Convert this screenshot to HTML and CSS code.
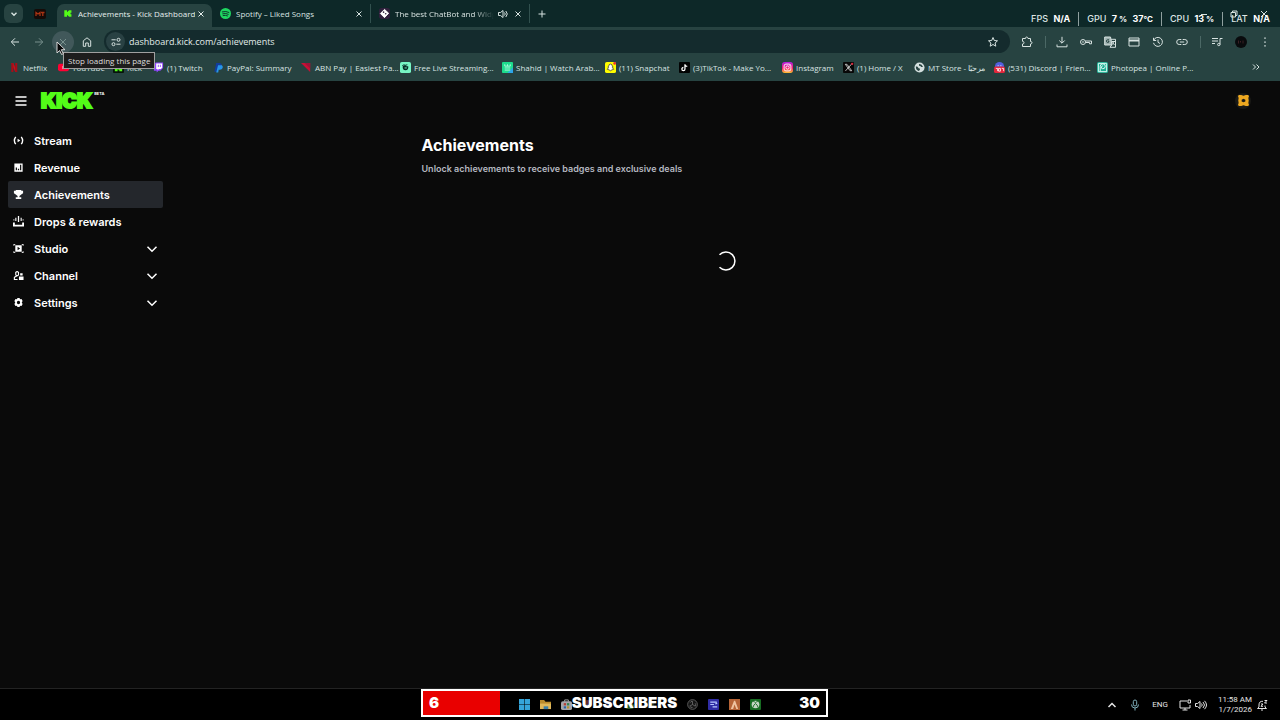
FILE: index.html
```html
<!DOCTYPE html>
<html lang="en">
<head>
  <meta charset="utf-8">
  <title>Achievements - Kick Dashboard</title>
  <link rel="stylesheet" href="styles.css">
</head>
<body>

<!-- Browser window -->
<header class="browser">
  <div class="tab-strip">
    <button class="tab-search" type="button" aria-label="Search tabs">
      <svg class="icon" viewBox="0 0 12 12"><path d="M3.5 4.8 6 7.3l2.5-2.5" stroke-width="1.4"/></svg>
    </button>
    <button class="pinned" type="button" aria-label="Pinned tab">
      <svg viewBox="0 0 12 12"><rect y="1" width="12" height="10" rx="2" fill="#150b08"/><path d="M2 8V4.500l2 1.500 2-1.500V8M7 4.500h3.500M8.800 4.500V8" fill="none" stroke="#a83414" stroke-width="1.300"/></svg>
    </button>
    <div class="tab active">
      <svg class="favicon" viewBox="0 0 12 12"><path fill="#53fc18" d="M2.500 2.500h3v1.800h.8v-.9h1v-.9h3v2.700h-1v1.600h1v2.700h-3v-.9h-1v-.9h-.8v1.800h-3z"/></svg>
      <span class="tab-title">Achievements - Kick Dashboard</span>
      <button class="tab-close" type="button" aria-label="Close"><svg class="icon" viewBox="0 0 12 12"><path d="m3.500 3.500 5 5m0-5-5 5"/></svg></button>
    </div>
    <div class="tab">
      <svg class="favicon" viewBox="0 0 12 12"><circle cx="6" cy="6" r="6" fill="#1ed760"/><path d="M2.500 4.200q4-1.200 7.200.6M3 6.300q3.400-1 6 .5M3.400 8.200q2.700-.7 4.800.4" fill="none" stroke="#0d2828" stroke-width="1" stroke-linecap="round"/></svg>
      <span class="tab-title">Spotify – Liked Songs</span>
      <button class="tab-close" type="button" aria-label="Close"><svg class="icon" viewBox="0 0 12 12"><path d="m3.500 3.500 5 5m0-5-5 5"/></svg></button>
    </div>
    <div class="tab">
      <svg class="favicon" viewBox="0 0 12 12"><rect width="12" height="12" rx="3" fill="#30203c"/><path d="m6 1.500 4.500 4.200L6 10.500 1.500 6z" fill="#fff" stroke="#fff"/><circle cx="5" cy="4.500" r=".9" fill="#30203c"/><circle cx="7.300" cy="6.300" r=".9" fill="#30203c"/></svg>
      <span class="tab-title fade">The best ChatBot and Widg</span>
      <svg class="icon sound" viewBox="0 0 12 12"><path d="M1.500 4.500h2L6 2.500v7L3.500 7.500h-2zM7.500 4.500q1.500 1.500 0 3M8.800 3q3 3 0 6"/></svg>
      <button class="tab-close" type="button" aria-label="Close"><svg class="icon" viewBox="0 0 12 12"><path d="m3.500 3.500 5 5m0-5-5 5"/></svg></button>
    </div>
    <button class="new-tab" type="button" aria-label="New tab"><svg class="icon" viewBox="0 0 12 12"><path d="M6 2.500v7M2.500 6h7"/></svg></button>
    <div class="window-buttons">
      <button type="button" aria-label="Minimize"><svg class="icon" viewBox="0 0 12 12"><path d="M3 6.500h6"/></svg></button>
      <button type="button" aria-label="Restore"><svg class="icon" viewBox="0 0 12 12"><path d="M3 4.500h4.500V9H3zM4.500 4.500v-1.500H9v4.500H7.500"/></svg></button>
      <button type="button" aria-label="Close window"><svg class="icon" viewBox="0 0 12 12"><path d="m3 3 6 6m0-6-6 6"/></svg></button>
    </div>
  </div>

  <div class="toolbar">
    <button class="tool" type="button" aria-label="Back"><svg class="icon" viewBox="0 0 12 12"><path d="M10 6H2.500M6 2.300 2.300 6 6 9.700"/></svg></button>
    <button class="tool dim" type="button" aria-label="Forward"><svg class="icon" viewBox="0 0 12 12"><path d="M2 6h7.500M6 2.300 9.700 6 6 9.700"/></svg></button>
    <button class="tool dim hovered" type="button" aria-label="Stop"><svg class="icon" viewBox="0 0 12 12"><path d="m3 3 6 6m0-6-6 6"/></svg></button>
    <button class="tool" type="button" aria-label="Home"><svg class="icon" viewBox="0 0 12 12"><path d="M2.300 10.300V4.800L6 1.800l3.700 3v5.500H7.300V7H4.700v3.300z"/></svg></button>
    <form class="omnibox">
      <span class="site-info"><svg class="icon" viewBox="0 0 12 12"><path d="M1.500 3.800h4.200M6.300 8.200h4.200"/><circle cx="8.500" cy="3.800" r="1.500"/><circle cx="3.500" cy="8.200" r="1.500"/></svg></span>
      <input class="url" type="text" aria-label="Address" value="dashboard.kick.com/achievements">
      <svg class="icon" viewBox="0 0 12 12"><path d="m6 1.500 1.300 3 3.200.3L8.100 7l.7 3.200L6 8.500l-2.800 1.700L3.900 7 1.500 4.800l3.200-.3z"/></svg>
    </form>
    <div class="extensions">
      <button class="tool" type="button" aria-label="Extensions"><svg class="icon" viewBox="0 0 12 12"><path d="M1.500 2.500h3q0-1.500 1.200-1.500T7 2.500h2.500v3q1.500 0 1.500 1.200T9.500 8v2.500h-8V8q1.500 0 1.500-1.300T1.500 5.300z"/></svg></button>
      <span class="divider"></span>
      <button class="tool" type="button" aria-label="Downloads"><svg class="icon" viewBox="0 0 12 12"><path d="M6 .8V7M3.300 4.500 6 7.200l2.700-2.700M1 8.500v2.300h10V8.500"/></svg></button>
      <button class="tool" type="button" aria-label="Passwords"><svg class="icon" viewBox="0 0 12 12"><circle cx="3" cy="6" r="2.500"/><circle cx="3" cy="6" r=".4"/><path d="M5.500 5h6v2.800h-2V6.500H5.500"/></svg></button>
      <button class="tool" type="button" aria-label="Translate"><svg class="icon" viewBox="0 0 12 12"><path d="M.7 1h5.800l1.500 8H.7z" fill="#9fb2b0"/><path d="M7 3.300h4.500v8H6L7.700 9M8 5.500h3M9.500 5v.5Q9.500 7.500 8 8.500M8.500 6.500 10.500 9"/><path d="M5 3.800H3.500q-1 0-1 1.300T3.700 6.500 5 5.300h-1" stroke="#274341"/></svg></button>
      <button class="tool" type="button" aria-label="Payment"><svg class="icon" viewBox="0 0 12 12"><path d="M1 2h10v8H1z"/><path d="M1 4.500h10" stroke-width="2"/></svg></button>
      <button class="tool" type="button" aria-label="History"><svg class="icon" viewBox="0 0 12 12"><path d="M1.500 1.800v2.700h2.700M1.700 4.300a4.500 4.500 0 1 1-.2 2.500M6 3.500V6.300l2 1.200"/></svg></button>
      <button class="tool" type="button" aria-label="Copy link"><svg class="icon" viewBox="0 0 12 12"><path d="M5.300 3.500H3.200a2.500 2.500 0 0 0 0 5h2.100M6.700 3.500h2.100a2.500 2.500 0 0 1 0 5H6.700M3.800 6h4.400"/></svg></button>
      <span class="divider"></span>
      <button class="tool" type="button" aria-label="Media"><svg class="icon" viewBox="0 0 12 12"><path d="M1 2.500h6M1 5h6M1 7.500h3M9 8.500V2.500h2.500"/><circle cx="7.800" cy="8.500" r="1.200"/></svg></button>
      <button class="tool" type="button" aria-label="Profile"><svg class="avatar" viewBox="0 0 12 12"><circle cx="6" cy="6" r="6" fill="#090b0d"/><path d="M3.500 4.500v3M5.500 5v1.500M8 4.500v3" stroke="#3b2025"/></svg></button>
      <button class="tool" type="button" aria-label="More"><svg class="icon" viewBox="0 0 12 12"><path d="M6 1.500v1.300M6 5.400v1.300M6 9.300v1.300" stroke-width="1.500"/></svg></button>
    </div>
  </div>

  <nav class="bookmarks">
    <a href="#"><svg viewBox="0 0 12 12"><path d="M2.500 1h2.200l4.300 10H6.800z" fill="#c80f1c"/><path d="M2.500 1h2.200v10H2.500zM6.800 1H9v10H6.800z" fill="#a80d18"/></svg>Netflix</a>
    <a href="#"><svg viewBox="0 0 12 12"><rect y="2" width="12" height="8" rx="2" fill="#f03"/><path d="m5 4 3 2-3 2z" fill="#fff"/></svg>YouTube</a>
    <a href="#"><svg viewBox="0 0 12 12"><rect width="12" height="12" rx="1" fill="#06140a"/><path fill="#53fc18" d="M2 2h3v2.200h1V3h1V2h3v3H9v2h1v3H7V9H6V7.800H5V10H2z"/></svg>Kick</a>
    <a href="#"><svg viewBox="0 0 12 12"><path d="M1 2.500 3 .5h8v6L8 9.500H6L4 11.500v-2H1z" fill="#9146ff"/><path d="M3.500 1.500H10v4.700L8.500 7.500h-2L5 9V7.500H3.500z" fill="#fff"/><path d="M5.800 3v2.500M8 3v2.500" stroke="#9146ff"/></svg>(1) Twitch</a>
    <a href="#"><svg viewBox="0 0 12 12"><path d="M3.500 1h4Q10 1.500 9.500 4T6 7H4.700L4 10.500H1.500z" fill="#123c9c"/><path d="M5.500 3.500h4.200q1.500 1 .8 3T7.500 8.500H6.200L5.700 11.500H3.500z" fill="#2795e9"/></svg>PayPal: Summary</a>
    <a href="#"><svg viewBox="0 0 12 12"><path d="M0 1h10v10z" fill="#c90f35"/><path d="m4 1 6 6V1z" fill="#9d1238"/></svg>ABN Pay | Easiest Pa...</a>
    <a href="#"><svg viewBox="0 0 12 12"><rect width="12" height="12" rx="2" fill="#77f5c4"/><path d="M3 4.500q3-2 4 .2h2q.5 4.300-3 4.300-3.500 0-3-4.500z" fill="#072d27"/><path d="M2.500 4Q4 2.500 6 3.500L8 3" fill="none" stroke="#072d27"/><path d="M5 6.500h2.500" stroke="#77f5c4"/></svg>Free Live Streaming...</a>
    <a href="#"><svg viewBox="0 0 12 12"><rect width="12" height="12" rx="1" fill="#1ddc8d"/><path d="M12 6v6H6z" fill="#2da5e9"/><path d="M3 2.500v2h6v-2M6 2.500v2M3 6.500h6M3 8.800h6" fill="none" stroke="#b5fbe0"/></svg>Shahid | Watch Arab...</a>
    <a href="#"><svg viewBox="0 0 12 12"><rect width="12" height="12" rx="2" fill="#fffc00"/><path d="M6 2.300q2 0 2 2.500l1 .7-1 .5 1.500 2-1.800.5L6 9.500l-1.700-1L2.500 8 4 6l-1-.5 1-.7q0-2.500 2-2.500z" fill="#fff" stroke="#333" stroke-width=".8"/><circle cx="10.500" cy="1.500" r="1.500" fill="#e33"/></svg>(11) Snapchat</a>
    <a href="#"><svg viewBox="0 0 12 12"><rect width="12" height="12" rx="1" fill="#020303"/><path d="M6.500 2.500v5.200a1.700 1.700 0 1 1-1.700-1.700M6.500 2.800Q7 4.800 9 4.800" fill="none" stroke="#fff" stroke-width="1.400"/></svg>(3)TikTok - Make Yo...</a>
    <a href="#"><svg viewBox="0 0 12 12"><defs><linearGradient id="ig" x2="0" y2="1"><stop stop-color="#b020e0"/><stop offset=".55" stop-color="#f51b72"/><stop offset="1" stop-color="#ffc52d"/></linearGradient></defs><rect width="12" height="12" rx="3" fill="url(#ig)"/><rect x="2.300" y="2.300" width="7.400" height="7.400" rx="2" fill="none" stroke="#fff"/><circle cx="6" cy="6" r="1.800" fill="none" stroke="#fff"/><circle cx="8.200" cy="3.800" r=".5" fill="#fff"/></svg>Instagram</a>
    <a href="#"><svg viewBox="0 0 12 12"><rect width="12" height="12" rx="1" fill="#080808"/><path d="M2.500 2.500h1.800l5.200 7H7.700zM9.300 2.300 2.700 9.700" fill="none" stroke="#ddd" stroke-width=".9"/><circle cx="10" cy="2" r="1.300" fill="#d12b3f"/></svg>(1) Home / X</a>
    <a href="#"><svg viewBox="0 0 12 12"><circle cx="6" cy="6" r="5.500" fill="#d4e0df"/><path d="M2 5q2-.5 2.500 1t2 1Q7 9 5 9.800 2 9 2 5zM5.500 2.300q3-.3 4.300 3Q8 6 7.500 5t-2-1z" fill="#274341"/></svg>MT Store - مرحبًا</a>
    <a href="#"><svg viewBox="0 0 12 12"><circle cx="6" cy="5" r="5" fill="#5360df"/><rect y="5" width="12" height="7" rx="2" fill="#e3263b"/><path d="M2 7h2v3M5 7h2v3H5zM8.500 7h2v3M4 4h1M7 4h1" fill="none" stroke="#fff" stroke-width=".9"/></svg>(531) Discord | Frien...</a>
    <a href="#"><svg viewBox="0 0 12 12"><rect width="12" height="12" rx="2" fill="#1fae93"/><path d="M3.500 10V5q0-3 2.800-3T9 4.700 6.300 7.300 5 5q.5-1 1.500-.7M1.500 10.500v-9h9v9z" fill="none" stroke="#e9fffa"/></svg>Photopea | Online P...</a>
    <button class="more-bookmarks" type="button" aria-label="More bookmarks"><svg class="icon" viewBox="0 0 12 12"><path d="m3 3.500 2.500 2.500L3 8.500M6.500 3.500 9 6 6.500 8.500"/></svg></button>
  </nav>

  <div class="tooltip" role="tooltip">Stop loading this page</div>
  <svg class="cursor" viewBox="0 0 10 15"><path d="M1 1v11l2.600-2.500 2 4 1.700-.8-2-4H9z" fill="#050505" stroke="#e8e8e8" stroke-width=".9"/></svg>

  <div class="stats">
    <span>FPS <b>N/A</b></span>
    <span>GPU <b>7<small> %</small></b> <b>37<small>°C</small></b></span>
    <span>CPU <b>13<small> %</small></b></span>
    <span>LAT <b>N/A</b></span>
  </div>
</header>

<!-- Kick dashboard -->
<div class="dashboard">
  <div class="topbar">
    <button class="menu" type="button" aria-label="Menu"><svg viewBox="0 0 12 12"><path d="M.5 2h11M.5 6h11M.5 10h11"/></svg></button>
    <a class="logo" href="#"><span class="wordmark">KICK</span><sup>BETA</sup></a>
    <button class="account" type="button" aria-label="Account"><svg viewBox="0 0 12 12"><path fill="#eda820" fill-rule="evenodd" d="M1 0h2.500L6 .8 8.500 0H11l1 1.200-.7 2 .4 2.800-.4 2.800.7 2-1 1.200H8.500L6 11.200 3.500 12H1L0 10.800l.7-2L.3 6l.4-2.800-.7-2zm5 4.200-2 1V7l2 1 2-1V5.200z"/></svg></button>
  </div>

  <div class="content">
    <nav class="sidebar">
      <a href="#"><svg viewBox="0 0 12 12"><path d="M3 2q-3 4 0 8M9 2q3 4 0 8" fill="none" stroke="#fff" stroke-width="1.500"/><path d="m5 4 3 2-3 2z"/></svg>Stream</a>
      <a href="#"><svg viewBox="0 0 12 12"><path fill-rule="evenodd" d="M1.500 1.500h9v9h-9zM3 6v3h1.300V6zm2.300 1.300V9h1.400V7.300zM7.700 3v6H9V3z"/></svg>Revenue</a>
      <a class="current" href="#"><svg viewBox="0 0 12 12"><path d="M3 1h6v1h2v2.500L9 6 7 7.500V9h2v2H3V9h2V7.500L3 6 1 4.500V2h2z"/></svg>Achievements</a>
      <a href="#"><svg viewBox="0 0 12 12"><path d="M0 7h2v2.500h8V7h2v4.500H0zM5.300 0h1.400v6.500H5.300zM2.500 2h1.200v3.500H2.500zM8.300 2h1.200v3.500H8.300zM.5 3.500h1V5h-1zM10.500 3.500h1V5h-1z"/></svg>Drops &amp; rewards</a>
      <a href="#"><svg viewBox="0 0 12 12"><path fill-rule="evenodd" d="M2.500 2.500h7v7h-7zM5 4.200v3.600L7.800 6zM.5 1h2v1h-1v1h-1zM9.500 1h2v2h-1V2h-1zM.5 9h1v1h1v1h-2zM10.500 9h1v2h-2v-1h1z"/></svg>Studio<svg class="chevron" viewBox="0 0 12 12"><path d="m1.500 3.800 4.500 4.500 4.500-4.500"/></svg></a>
      <a href="#"><svg viewBox="0 0 12 12"><path d="M3 5.500v-3q1.500-1.500 3 0v3L4.500 6.500zM4 6.500 1.500 8v2.300H5" fill="none" stroke="#fff" stroke-width="1.200"/><path d="M7.800 3.500h2.700V6H7.800zM6.500 7.200h5V11h-5z"/></svg>Channel<svg class="chevron" viewBox="0 0 12 12"><path d="m1.500 3.800 4.500 4.500 4.500-4.500"/></svg></a>
      <a href="#"><svg viewBox="0 0 12 12"><path fill-rule="evenodd" d="M4.800 1h2.400l.4 1.500 1.700-.3 1.200 2.100L9.500 6l1 1.700-1.200 2.100-1.700-.3L7.200 11H4.800l-.4-1.500-1.700.3-1.200-2.100 1-1.700-1-1.700 1.200-2.100 1.700.3zM6 4.200a1.800 1.800 0 1 0 0 3.600 1.800 1.800 0 0 0 0-3.600z"/></svg>Settings<svg class="chevron" viewBox="0 0 12 12"><path d="m1.500 3.800 4.500 4.500 4.500-4.500"/></svg></a>
    </nav>

    <main>
      <section class="achievements">
        <h1>Achievements</h1>
        <p>Unlock achievements to receive badges and exclusive deals</p>
        <svg class="spinner" viewBox="0 0 20 20"><path d="M3.500 3.700a9 9 0 1 1 0 12.600"/></svg>
      </section>
    </main>
  </div>
</div>

<!-- Windows taskbar -->
<footer class="taskbar">
  <div class="apps">
    <svg viewBox="0 0 12 12"><path d="M0 0h5.700v5.700H0zM6.300 0H12v5.700H6.300zM0 6.300h5.700V12H0zM6.300 6.300H12V12H6.300z" fill="#35a4d9"/></svg>
    <svg viewBox="0 0 12 12"><path d="M0 1h4.500l1.500 2h6v8H0z" fill="#b98b2c"/><path d="M0 5h12v6H0z" fill="#dfb759"/><path d="M4 8h5v3H4z" fill="#3b7fa8"/></svg>
    <svg viewBox="0 0 12 12"><path d="M4 3V1h4v2" fill="none" stroke="#aaa"/><rect y="2.500" width="12" height="9.500" rx="2" fill="#a5a5aa"/><path d="M3 4.500h2.500V7H3z" fill="#b33f37"/><path d="M6.500 4.500H9V7H6.500z" fill="#32834d"/><path d="M3 8h2.500v2.300H3z" fill="#2864a7"/><path d="M6.500 8H9v2.300H6.500z" fill="#b19329"/></svg>
    <svg viewBox="0 0 12 12"><circle cx="6" cy="5" r="4" fill="#5e2c30"/><circle cx="6" cy="8" r="2.200" fill="#38508c"/></svg>
    <svg viewBox="0 0 12 12"><rect x="2" y="2" width="8" height="8" rx="3" fill="#141c3c"/></svg>
    <svg viewBox="0 0 12 12"><rect x="1" y="5" width="10" height="6" rx="3" fill="#2c5b25"/></svg>
    <svg viewBox="0 0 12 12"><rect x="2" y="2" width="8" height="8" rx="2" fill="#1c2a18"/></svg>
    <svg viewBox="0 0 12 12"><rect x="2" y="2" width="8" height="8" rx="3" fill="#151515"/></svg>
    <svg viewBox="0 0 12 12"><circle cx="6" cy="6" r="5.300" fill="#161616" stroke="#777" stroke-width=".8"/><path d="M6 6V2.500q-2 0-2.500 1.500M6 6l3 1.800q1-1.500 0-3M6 6 3 7.800q1 1.700 3 1.500" fill="none" stroke="#777" stroke-width=".8"/></svg>
    <svg viewBox="0 0 12 12"><rect width="12" height="12" rx="1" fill="#302da5"/><path d="M2.500 3.500h7M2.500 6h4M5 8.500h5M8 5.500l2-1" stroke="#b7c7ff" stroke-width="1.300"/></svg>
    <svg viewBox="0 0 12 12"><rect width="12" height="12" fill="#b66436"/><path d="m2 11 3.500-9h1.200L10 11H8L6 6 4.500 11z" fill="#efc39f"/></svg>
    <svg viewBox="0 0 12 12"><rect width="12" height="12" rx="1" fill="#176c22"/><circle cx="6" cy="6" r="4.200" fill="#c4d4c3"/><path d="M3 9.500Q4 6 6 5q2 1 3 4.500M3.500 2.500Q5 3 6 4q1-1 2.500-1.500" fill="none" stroke="#176c22"/></svg>
  </div>
  <div class="tray">
    <svg class="icon" viewBox="0 0 12 12"><path d="M2.500 8 6 4.500 9.500 8" stroke-width="1.500"/></svg>
    <svg class="icon mic" viewBox="0 0 12 12"><rect x="4.300" y="1" width="3.400" height="6" rx="1.700"/><path d="M2.500 5.500q0 3.500 3.500 3.500t3.500-3.500M6 9v2.500"/></svg>
    <span class="lang">ENG</span>
    <span class="tray-pair">
      <svg class="icon" viewBox="0 0 12 12"><path d="M8 2H1v7h10V6M3.500 11h5M6 9v2M9 1h2.500v3H9z"/></svg>
      <svg class="icon" viewBox="0 0 12 12"><path d="M.5 4.500h2L5 2.500v7L2.500 7.500h-2zM6.500 4.500q1.500 1.500 0 3M8 3q3 3 0 6M9.500 1.800q4 4.200 0 8.400"/></svg>
    </span>
    <span class="tray-pair">
      <time class="clock">11:58 AM<br>1/7/2026</time>
      <svg class="icon" viewBox="0 0 12 12"><path d="M7 2.300Q3 2 3 6v2L1.500 9.500h9L9 8V6.500M5 11h2M5 5h2L5 7.300h2M8.500 1.500h2.500L8.500 4H11"/></svg>
    </span>
  </div>

  <!-- Stream goal -->
  <div class="goal">
    <div class="goal-fill" style="width: 19%"></div>
    <span>6</span><span>SUBSCRIBERS</span><span class="goal-target">30</span>
  </div>
</footer>

</body>
</html>
```
FILE: styles.css
```css
* {
  box-sizing: border-box;
}

body {
  display: flex;
  flex-direction: column;
  min-height: 100vh;
  margin: 0;
  background: #0a0a0a;
  color: #fff;
  font-family: Inter, sans-serif;
}

button {
  display: flex;
  align-items: center;
  justify-content: center;
  padding: 0;
  border: none;
  background: none;
  color: inherit;
  cursor: pointer;
}

a {
  color: inherit;
  text-decoration: none;
}

svg {
  display: block;
  flex: none;
  width: 12px;
  height: 12px;
}

.icon {
  fill: none;
  stroke: currentColor;
}

/* Browser */
.browser {
  position: relative;
  background: #274341;
  color: #d8e3e1;
  font-family: "Open Sans", "Noto Sans", sans-serif;
  font-size: 8px;
}

.tab-strip {
  display: flex;
  align-items: center;
  height: 27px;
  padding-left: 4px;
  background: #0d2828;
}

.tab-search {
  width: 19px;
  height: 19px;
  border-radius: 6px;
  background: #274341;
}

.pinned {
  width: 34px;
}

.tab {
  display: flex;
  align-items: center;
  width: 159px;
  height: 19px;
  padding: 0 5px 0 8px;
  border-right: 1px solid #31504e;
}

.tab.active {
  align-self: flex-end;
  width: 155px;
  height: 23px;
  padding: 0 5px 4px;
  border: none;
  border-radius: 7px 7px 0 0;
  background: #274341;
  color: #e6efed;
}

.favicon {
  width: 11px;
  height: 11px;
  margin-right: 5px;
}

.tab-title {
  flex: 1;
  overflow: hidden;
  white-space: nowrap;
}

.fade {
  -webkit-mask-image: linear-gradient(to right, #000 80%, transparent);
  mask-image: linear-gradient(to right, #000 80%, transparent);
}

.sound {
  margin: 0 3px;
}

.new-tab {
  width: 23px;
}

.window-buttons {
  display: flex;
  gap: 18px;
  margin-left: auto;
  padding-right: 10px;
}

.toolbar {
  display: flex;
  align-items: center;
  height: 27px;
  padding: 0 2px 0 4px;
  margin-top: 1px;
}

.tool {
  width: 22px;
  height: 22px;
  margin-right: 2px;
}

.dim {
  color: #78908d;
}

.hovered {
  border-radius: 11px;
  background: #41585a;
}

.omnibox {
  display: flex;
  flex: 1;
  align-items: center;
  height: 23px;
  margin-left: 4px;
  padding: 0 11px 0 2px;
  border-radius: 12px;
  background: #142b2d;
}

.site-info {
  display: flex;
  align-items: center;
  justify-content: center;
  width: 19px;
  height: 19px;
  border-radius: 10px;
  background: #294143;
}

.url {
  flex: 1;
  padding: 0 4px;
  border: none;
  outline: none;
  background: none;
  color: #e2ebea;
  font: inherit;
  font-size: 9px;
}

.extensions {
  display: flex;
  align-items: center;
  padding-left: 6px;
}

.divider {
  width: 1px;
  height: 12px;
  margin: 0 5px;
  background: #4b6865;
}

.bookmarks {
  display: grid;
  grid-template-columns: 49px 55px 40px 60px 88px 99px 102px 103px 74px 103px 61px 71px 80px 103px 103px 1fr;
  align-items: center;
  height: 26px;
  padding: 0 18px 2px 9px;
}

.bookmarks a {
  display: flex;
  align-items: center;
  gap: 3px;
  white-space: nowrap;
}

.bookmarks a svg {
  width: 11px;
  height: 11px;
}

.more-bookmarks {
  justify-self: end;
}

.tooltip {
  position: absolute;
  top: 52px;
  left: 63px;
  height: 17px;
  padding: 0 4px;
  border: 1px solid #a0a0a0;
  background: #1d1d1d;
  color: #ddd;
  line-height: 15px;
  white-space: nowrap;
}

.cursor {
  position: absolute;
  top: 41px;
  left: 56px;
  width: 10px;
  height: 15px;
}

.stats {
  position: absolute;
  top: 12px;
  right: 10px;
  display: flex;
  color: #dde6e5;
  font-family: Inter, sans-serif;
  font-size: 9px;
  font-weight: 500;
  line-height: 14px;
}

.stats span {
  padding: 0 8px;
  border-left: 1px solid #8fa09f;
}

.stats span:first-child {
  border: none;
}

.stats span:last-child {
  padding-right: 0;
}

.stats b {
  margin-left: 3px;
  color: #fff;
}

.stats small {
  font-size: 8px;
}

/* Dashboard */
.dashboard {
  flex: 1;
}

.topbar {
  display: flex;
  align-items: center;
  height: 39px;
  padding: 0 29px 0 15px;
}

.menu svg {
  fill: none;
  stroke: #fff;
  stroke-width: 1.5;
}

.logo {
  display: flex;
  align-items: center;
  margin-left: 14px;
}

.wordmark {
  color: #53fc18;
  font-size: 20px;
  font-weight: 900;
  line-height: 22px;
  -webkit-text-stroke: 2px #53fc18;
}

.logo sup {
  align-self: flex-start;
  margin-left: 2px;
  font-size: 4px;
  font-weight: 700;
  line-height: 8px;
}

.account {
  width: 16px;
  height: 16px;
  margin-left: auto;
  border-radius: 8px;
  background: #1a1a17;
}

.account svg {
  width: 11px;
  height: 11px;
}

.content {
  display: flex;
}

.sidebar {
  width: 171px;
  padding: 7px 8px;
}

.sidebar a {
  display: flex;
  align-items: center;
  height: 27px;
  padding: 0 5px;
  border-radius: 2px;
  font-size: 11px;
  font-weight: 600;
}

.sidebar a svg:first-child {
  width: 11px;
  height: 11px;
  margin-right: 10px;
  fill: #fff;
}

.sidebar .current {
  background: #24272c;
}

.sidebar .chevron {
  margin-left: auto;
  fill: none;
  stroke: #fff;
  stroke-width: 1.5;
}

main {
  flex: 1;
  padding: 15px 16px;
}

.achievements {
  max-width: 608px;
  margin: 0 auto;
}

h1 {
  margin: 0;
  font-size: 16px;
  font-weight: 700;
  line-height: 20px;
}

p {
  margin: 7px 0 0;
  color: #b5b8c0;
  font-size: 9px;
  font-weight: 600;
  line-height: 14px;
}

.spinner {
  width: 20px;
  height: 20px;
  margin: 75px auto 0;
  fill: none;
  stroke: #fff;
  stroke-width: 1.5;
}

/* Taskbar */
.taskbar {
  position: relative;
  display: grid;
  grid-template-columns: 1fr auto 1fr;
  align-items: center;
  height: 32px;
  border-top: 1px solid #232323;
  background: #000;
}

.apps {
  display: flex;
  grid-column: 2;
  gap: 10px;
}

.apps svg {
  width: 11px;
  height: 11px;
}

.tray {
  display: flex;
  align-items: center;
  justify-content: flex-end;
  gap: 11px;
  padding-right: 12px;
  color: #e4e4e4;
  font-family: Roboto, "Noto Sans", sans-serif;
  font-size: 8px;
}

.mic {
  color: #7fb0bb;
}

.tray-pair {
  display: flex;
  align-items: center;
  gap: 4px;
}

.clock {
  line-height: 10px;
  text-align: right;
}

.goal {
  position: absolute;
  top: 0;
  left: calc(50% - 219px);
  display: grid;
  grid-template-columns: 1fr auto 1fr;
  align-items: center;
  width: 407px;
  height: 28px;
  padding: 0 6px 2px;
  border: 2px solid #fff;
  font-size: 15px;
  font-weight: 900;
}

.goal-fill {
  position: absolute;
  top: 0;
  bottom: 0;
  left: 0;
  background: #e90000;
}

.goal span {
  position: relative;
}

.goal-target {
  text-align: right;
}
```
